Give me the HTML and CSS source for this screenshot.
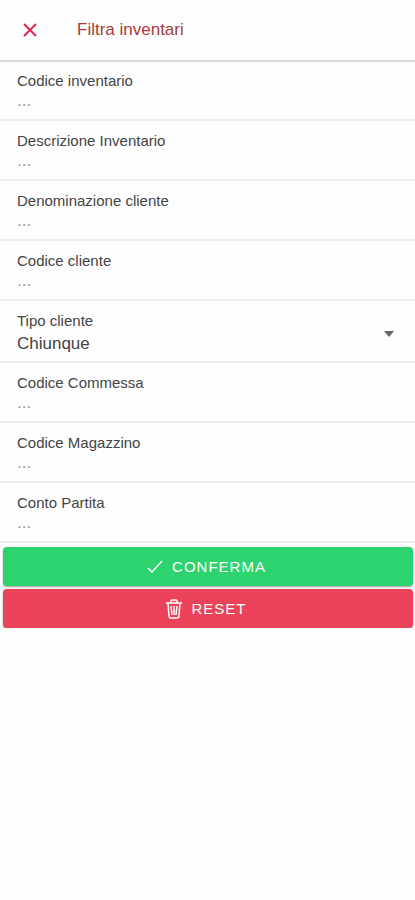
FILE: index.html
```html
<!DOCTYPE html>
<html lang="it">
<head>
<meta charset="utf-8">
<meta name="viewport" content="width=device-width, initial-scale=1">
<title>Filtra inventari</title>
<link rel="stylesheet" href="styles.css">
</head>
<body>
<header class="toolbar">
  <button class="close" type="button" aria-label="Chiudi">
    <svg viewBox="0 0 14 14" width="14" height="14" aria-hidden="true"><path d="M1 1 13 13M13 1 1 13"/></svg>
  </button>
  <h1 class="title">Filtra inventari</h1>
</header>
<form class="filters">
  <div class="field">
    <label for="codice-inventario">Codice inventario</label>
    <input id="codice-inventario" type="text" placeholder="...">
  </div>
  <div class="field">
    <label for="descrizione">Descrizione Inventario</label>
    <input id="descrizione" type="text" placeholder="...">
  </div>
  <div class="field">
    <label for="denominazione">Denominazione cliente</label>
    <input id="denominazione" type="text" placeholder="...">
  </div>
  <div class="field">
    <label for="codice-cliente">Codice cliente</label>
    <input id="codice-cliente" type="text" placeholder="...">
  </div>
  <div class="field field-select">
    <label for="tipo-cliente">Tipo cliente</label>
    <div class="select-line">
      <select id="tipo-cliente"><option>Chiunque</option></select>
      <svg class="caret" viewBox="0 0 10 6" width="10" height="6" aria-hidden="true"><path d="M0 0h10L5 6z"/></svg>
    </div>
  </div>
  <div class="field">
    <label for="commessa">Codice Commessa</label>
    <input id="commessa" type="text" placeholder="...">
  </div>
  <div class="field">
    <label for="magazzino">Codice Magazzino</label>
    <input id="magazzino" type="text" placeholder="...">
  </div>
  <div class="field">
    <label for="partita">Conto Partita</label>
    <input id="partita" type="text" placeholder="...">
  </div>
  <div class="actions">
    <button class="action confirm" type="submit">
      <svg viewBox="0 0 18 18" width="18" height="18" aria-hidden="true"><path d="M2 10 6 14 16 3"/></svg>
      Conferma
    </button>
    <button class="action reset" type="reset">
      <svg viewBox="0 0 18 20" width="18" height="20" aria-hidden="true"><path d="M1 4H17M3 4 4 17Q4 19 6 19H12Q14 19 14 17L15 4M6 4V2Q6 1 7 1H11Q12 1 12 2V4M6 7 7 16M9 7V16M12 7 11 16"/></svg>
      Reset
    </button>
  </div>
</form>
</body>
</html>
```
FILE: styles.css
```css
* {
  box-sizing: border-box;
}

body {
  margin: 0;
  background: #fefefe;
  color: #444;
  font-family: "Liberation Sans", Arial, sans-serif;
  font-size: 15px;
}

button,
input,
select {
  margin: 0;
  padding: 0;
  border: 0;
  background: none;
  color: inherit;
  font: inherit;
}

.toolbar {
  position: relative;
  display: flex;
  align-items: center;
  height: 60px;
  padding: 0 16px;
  box-shadow: 0 2px 1px #d9d9d9;
}

.close {
  display: flex;
  align-items: center;
  justify-content: center;
  width: 28px;
  height: 40px;
}

.close svg {
  fill: none;
  stroke: #e0284f;
  stroke-width: 2;
}

.title {
  margin: 0 0 0 33px;
  color: #a93a3a;
  font-size: 17px;
  font-weight: 400;
}

.filters {
  padding-top: 1px;
}

.field {
  display: flex;
  flex-direction: column;
  height: 60px;
  padding: 10px 17px 0;
  border-bottom: 2px solid #efefef;
}

.field label {
  line-height: 20px;
}

.field input {
  width: 100%;
  height: 20px;
  font-size: 17px;
  outline: 0;
}

.field input::placeholder {
  color: #999;
  opacity: 1;
}

.field-select {
  height: 62px;
}

.select-line {
  display: flex;
  align-items: center;
  height: 24px;
}

.select-line select {
  flex: 1;
  appearance: none;
  font-size: 17px;
  outline: 0;
}

.caret {
  margin: 0 4px 18px 0;
  fill: #666;
}

.actions {
  display: grid;
  gap: 3px;
  padding: 4px 2px 0 3px;
}

.action {
  display: flex;
  align-items: center;
  justify-content: center;
  gap: 8px;
  height: 39px;
  padding-right: 4px;
  border-radius: 4px;
  box-shadow: 0 1px 2px #0006;
  color: #fff;
  letter-spacing: 1px;
  text-transform: uppercase;
}

.action svg {
  fill: none;
  stroke: #fff;
  stroke-width: 1.5;
}

.confirm {
  background: #2dd36f;
}

.reset {
  background: #eb445a;
}
```
